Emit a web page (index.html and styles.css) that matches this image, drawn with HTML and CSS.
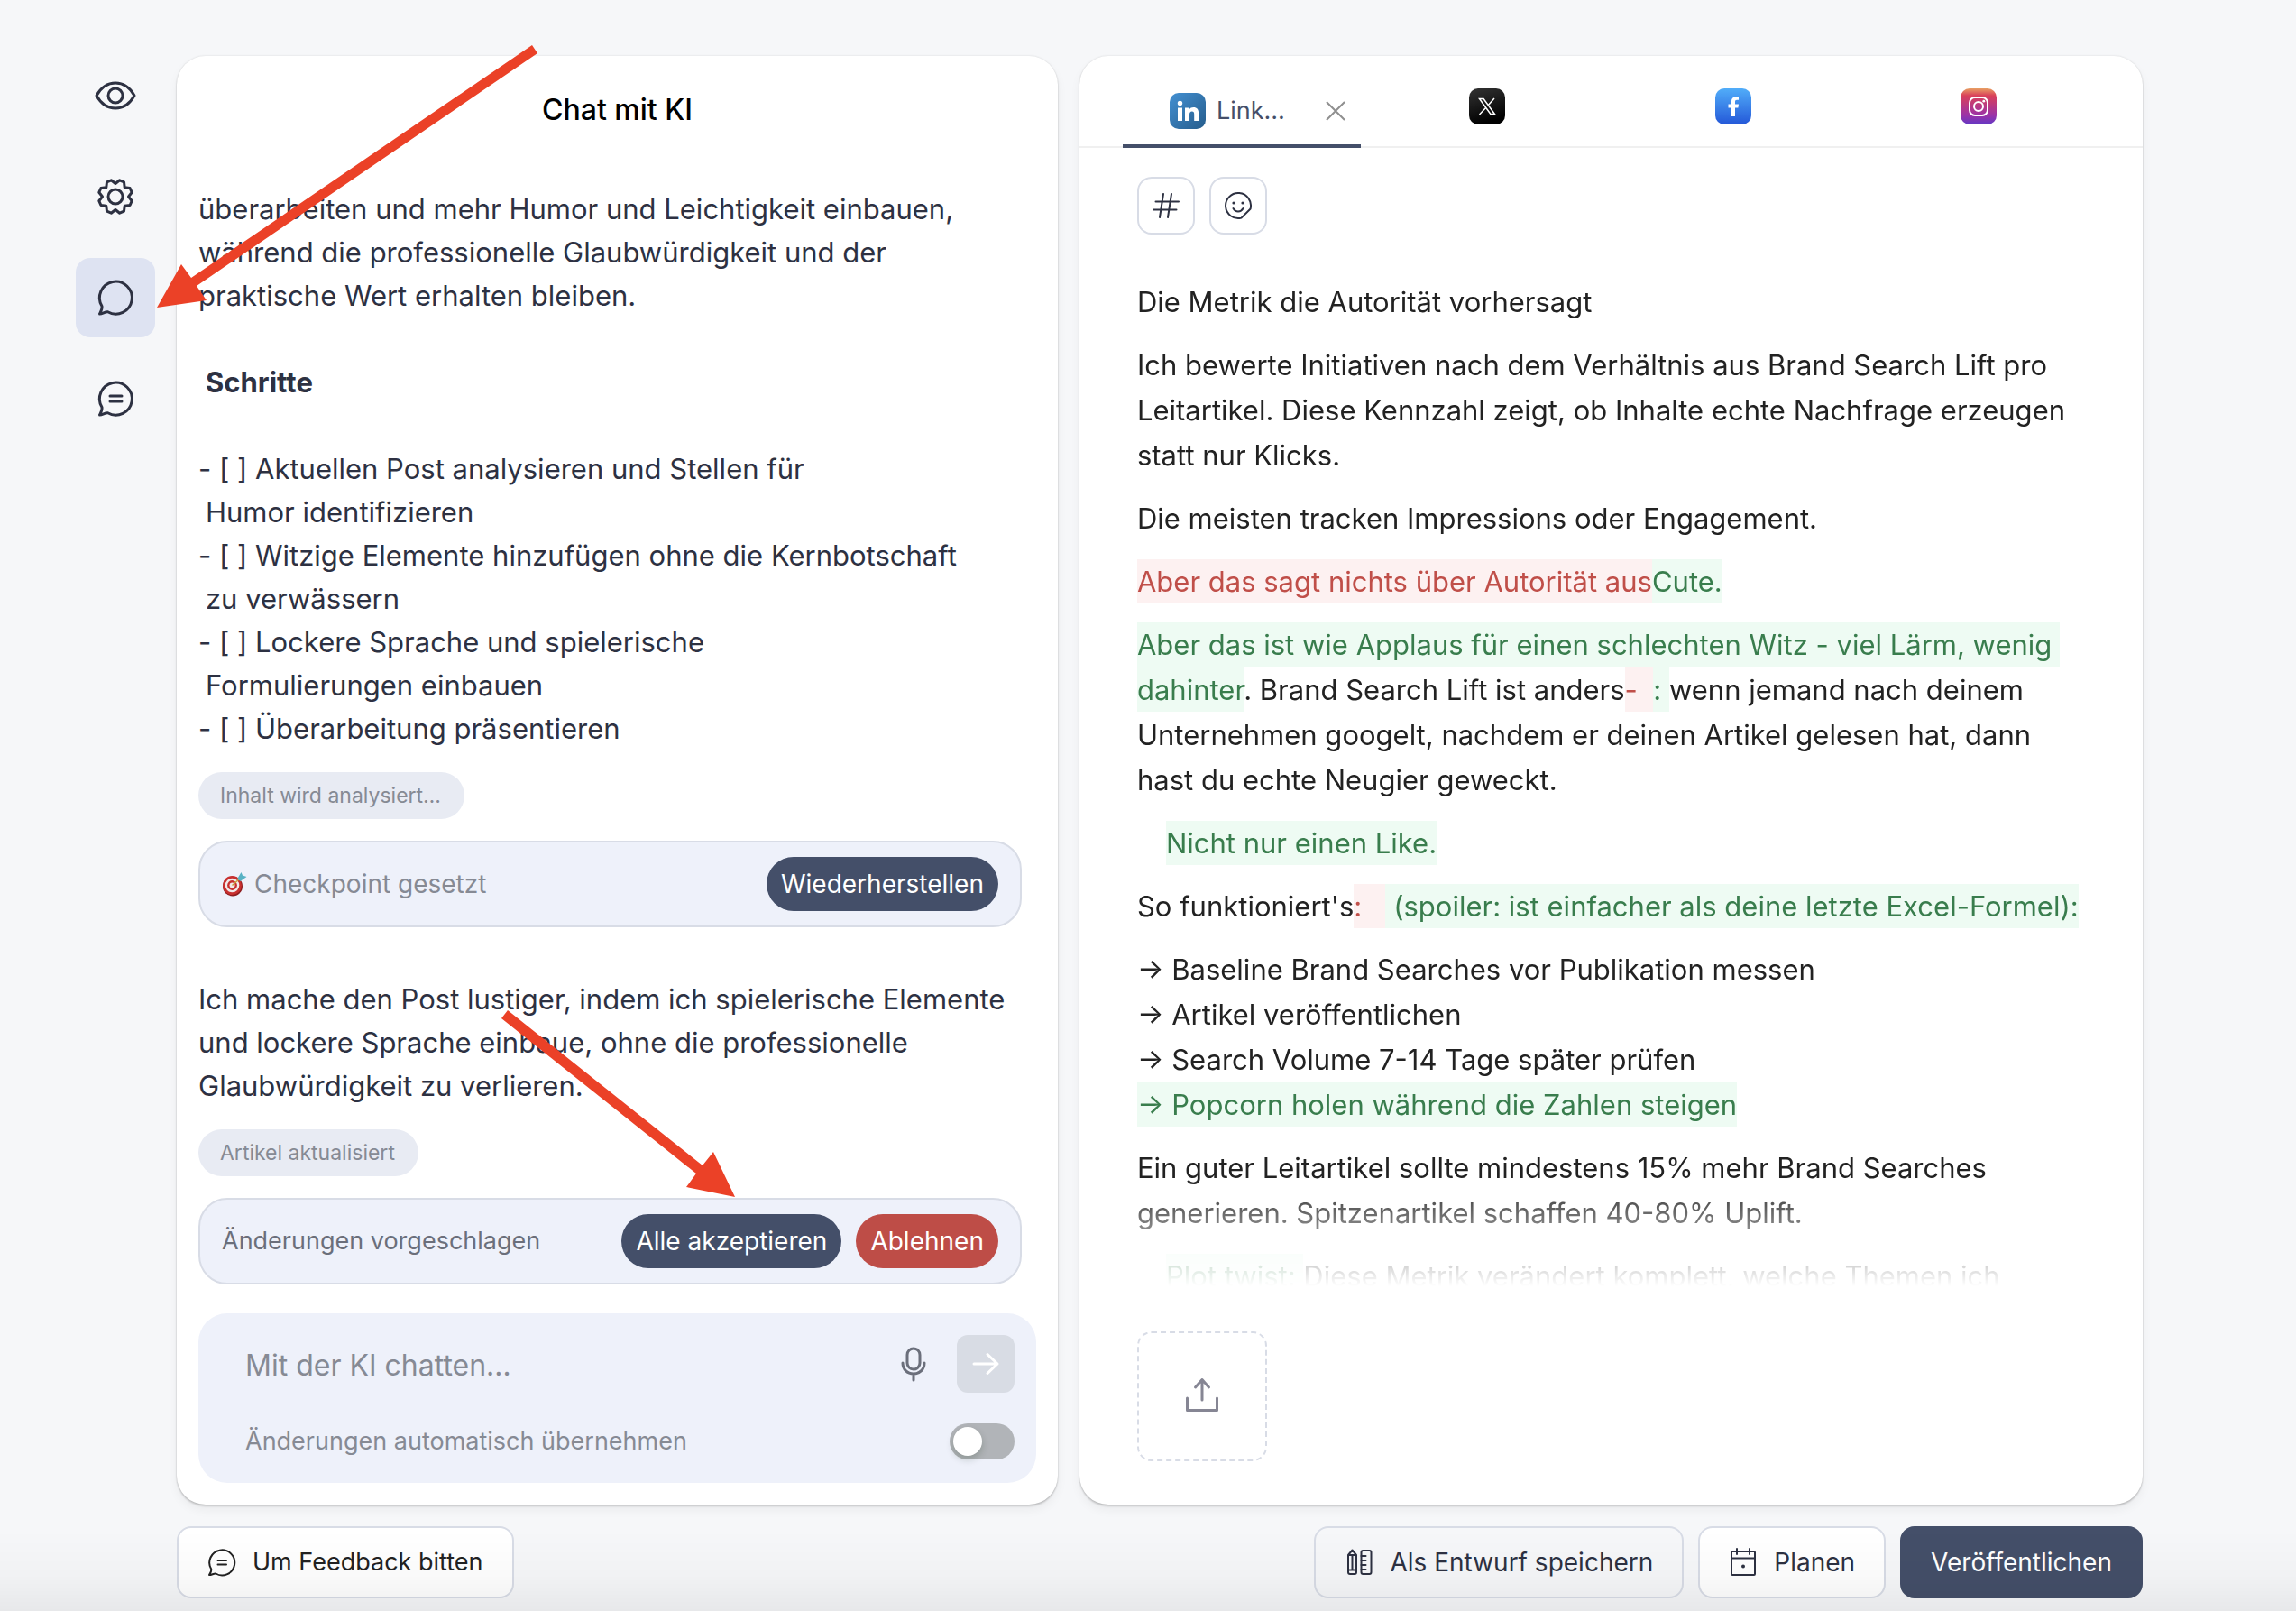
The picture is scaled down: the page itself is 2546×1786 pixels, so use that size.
FILE: index.html
```
<!DOCTYPE html>
<html lang="de">
<head>
<meta charset="utf-8">
<meta name="viewport" content="width=device-width, initial-scale=1">
<title>Chat mit KI</title>
<link rel="stylesheet" href="styles.css">
</head>
<body>
<svg class="defs" width="0" height="0" aria-hidden="true">
  <defs>
    <linearGradient id="g-linkedin" x1="0" y1="0" x2="1" y2="1"><stop offset="0" stop-color="#4390d2"/><stop offset="1" stop-color="#265d8c"/></linearGradient>
    <linearGradient id="g-x" x1="0" y1="0" x2="0.3" y2="1"><stop offset="0" stop-color="#333"/><stop offset="1" stop-color="#000"/></linearGradient>
    <linearGradient id="g-facebook" x1="0" y1="0" x2="0" y2="1"><stop offset="0" stop-color="#51adf9"/><stop offset="1" stop-color="#2458d8"/></linearGradient>
    <linearGradient id="g-instagram" x1="0" y1="0" x2="0" y2="1"><stop offset="0" stop-color="#e8a063"/><stop offset="0.2" stop-color="#d9405a"/><stop offset="0.75" stop-color="#9a32a8"/><stop offset="1" stop-color="#6238c4"/></linearGradient>
  </defs>
</svg>

<div class="workspace">
  <nav class="rail" aria-label="Ansichten">
    <button class="rail-button" type="button" aria-label="Vorschau"><svg class="icon" viewBox="0 0 48 48"><path d="M3 24C8 15 15 10 24 10S40 15 45 24C40 33 33 38 24 38S8 33 3 24Z"/><circle cx="24" cy="24" r="8"/></svg></button>
    <button class="rail-button" type="button" aria-label="Einstellungen"><svg class="icon" viewBox="0 0 48 48"><path d="M24 9.500 28.700 5.800 33.500 7.900 34.200 13.800 40.100 14.500 42.200 19.300 38.500 24 42.200 28.700 40.100 33.500 34.200 34.200 33.500 40.100 28.700 42.200 24 38.500 19.300 42.200 14.500 40.100 13.800 34.200 7.900 33.500 5.800 28.700 9.500 24 5.800 19.300 7.900 14.500 13.800 13.800 14.500 7.900 19.300 5.800Z"/><circle cx="24" cy="24" r="8"/></svg></button>
    <button class="rail-button is-active" type="button" aria-label="Chat"><svg class="icon" viewBox="0 0 48 48"><path d="M9 33.500A18 18 0 1 1 15.500 39.800C12 39.600 10 42 6.500 42 8 39 9.500 36.500 9 33.500Z"/></svg></button>
    <button class="rail-button" type="button" aria-label="Kommentare"><svg class="icon" viewBox="0 0 48 48"><path d="M9 33.500A18 18 0 1 1 15.500 39.800C12 39.600 10 42 6.500 42 8 39 9.500 36.500 9 33.500ZM18 21h13M18 27h13"/></svg></button>
  </nav>

  <section class="panel chat">
    <h1 class="chat-title">Chat mit KI</h1>
    <div class="chat-log">
      <p>überarbeiten und mehr Humor und Leichtigkeit einbauen,<br>während die professionelle Glaubwürdigkeit und der<br>praktische Wert erhalten bleiben.</p>
      <h2>Schritte</h2>
      <ul class="steps">
        <li>- [ ] Aktuellen Post analysieren und Stellen für<br>Humor identifizieren</li>
        <li>- [ ] Witzige Elemente hinzufügen ohne die Kernbotschaft<br>zu verwässern</li>
        <li>- [ ] Lockere Sprache und spielerische<br>Formulierungen einbauen</li>
        <li>- [ ] Überarbeitung präsentieren</li>
      </ul>
      <span class="chip">Inhalt wird analysiert…</span>
      <div class="action-card checkpoint">
        <svg class="target" viewBox="0 0 28 28" aria-hidden="true"><ellipse cx="12" cy="16.500" rx="11" ry="11" fill="#8e1d1f"/><ellipse cx="11.500" cy="15.500" rx="10.500" ry="10.500" fill="#c8302f"/><circle cx="11.500" cy="15.500" r="7.800" fill="#f1e9e9"/><circle cx="11.500" cy="15.500" r="5.400" fill="#c8302f"/><circle cx="11.500" cy="15.500" r="3" fill="#f1e9e9"/><path d="M11.500 15.500 20 8" stroke="#c9a13c" stroke-width="1.500"/><path d="M17 8.500 21.500 1 23 4.500 27.500 6 20.500 11Z" fill="#58b2c4"/></svg>
        <span class="card-label">Checkpoint gesetzt</span>
        <button class="pill" type="button">Wiederherstellen</button>
      </div>
      <p class="reply">Ich mache den Post lustiger, indem ich spielerische Elemente<br>und lockere Sprache einbaue, ohne die professionelle<br>Glaubwürdigkeit zu verlieren.</p>
      <span class="chip">Artikel aktualisiert</span>
      <div class="action-card">
        <span class="card-label">Änderungen vorgeschlagen</span>
        <button class="pill" type="button">Alle akzeptieren</button>
        <button class="pill pill-danger" type="button">Ablehnen</button>
      </div>
    </div>
    <form class="composer">
      <div class="composer-row">
        <input class="composer-input" type="text" placeholder="Mit der KI chatten…" aria-label="Mit der KI chatten">
        <button class="mic" type="button" aria-label="Spracheingabe"><svg class="icon" viewBox="0 0 48 48"><rect x="17" y="7" width="14" height="23" rx="7"/><path d="M12 23c0 7 5 12 12 12s12-5 12-12M24 35v7"/></svg></button>
        <button class="send" type="submit" aria-label="Senden"><svg class="icon" viewBox="0 0 48 48"><path d="M11 24h26M26 13.500 37 24 26 34.500"/></svg></button>
      </div>
      <div class="composer-row">
        <label class="auto-label" for="auto">Änderungen automatisch übernehmen</label>
        <input class="switch" id="auto" type="checkbox">
      </div>
    </form>
  </section>

  <section class="panel post">
    <div class="tabs">
      <div class="tab is-active">
        <button class="tab-button" type="button">
          <svg class="logo" viewBox="0 0 40 40" aria-hidden="true"><rect width="40" height="40" rx="10" fill="url(#g-linkedin)"/><circle cx="11.500" cy="11.500" r="2.700" fill="#fff"/><path d="M9 16.500h5V31H9ZM17 16.500h4.800v2c1-1.600 2.600-2.400 4.600-2.400 4 0 5.800 2.500 5.800 6.900v8h-5v-7.300c0-2-.7-3.200-2.400-3.200-1.900 0-2.800 1.300-2.800 3.300V31h-5Z" fill="#fff"/></svg>
          <span>Link...</span>
        </button>
        <button class="tab-close" type="button" aria-label="Tab schließen"><svg viewBox="0 0 24 24" aria-hidden="true"><path d="m2 2 20 20M22 2 2 22"/></svg></button>
      </div>
      <div class="tab"><button class="tab-button" type="button" aria-label="X"><svg class="logo" viewBox="0 0 40 40"><rect width="40" height="40" rx="10" fill="url(#g-x)"/><path d="M11.500 11.500h4.600l12.400 17h-4.600ZM28 11 21.400 18.600M18.600 21.600 11.500 29" fill="none" stroke="#fff" stroke-width="1.500"/></svg></button></div>
      <div class="tab"><button class="tab-button" type="button" aria-label="Facebook"><svg class="logo" viewBox="0 0 40 40"><rect width="40" height="40" rx="10" fill="url(#g-facebook)"/><path d="M18 31V21.500h-3.500V17.500H18v-3c0-3.600 2.100-5.500 5.300-5.500 1.200 0 2.200.1 2.700.2v3.500h-2c-1.500 0-2 .9-2 2.100v2.700h4l-.6 4H22V31Z" fill="#fff"/></svg></button></div>
      <div class="tab"><button class="tab-button" type="button" aria-label="Instagram"><svg class="logo" viewBox="0 0 40 40"><rect width="40" height="40" rx="10" fill="url(#g-instagram)"/><g fill="none" stroke="#fff" stroke-width="2"><rect x="10" y="10" width="20" height="20" rx="6"/><circle cx="20" cy="20" r="5"/></g><circle cx="25.800" cy="14.200" r="1.400" fill="#fff"/></svg></button></div>
    </div>

    <div class="post-body">
      <div class="tools">
        <button class="tool" type="button" aria-label="Hashtags"><svg class="icon tool-icon" viewBox="0 0 32 32"><path d="M4.500 11.500H30M2 20.500H27.500M13 3 9 29M22 3 18 29"/></svg></button>
        <button class="tool" type="button" aria-label="Emoji"><svg class="icon tool-icon" viewBox="0 0 32 32"><path d="M19.500 29.600A14 14 0 1 1 29.600 19.500ZM10.500 19c2.500 4.500 8.500 4.500 11 0"/><circle class="dot" cx="11" cy="13" r="1.600"/><circle class="dot" cx="21" cy="13" r="1.600"/></svg></button>
      </div>

      <article class="editor">
        <p>Die Metrik die Autorität vorhersagt</p>
        <p>Ich bewerte Initiativen nach dem Verhältnis aus Brand Search Lift pro<br>Leitartikel. Diese Kennzahl zeigt, ob Inhalte echte Nachfrage erzeugen<br>statt nur Klicks.</p>
        <p>Die meisten tracken Impressions oder Engagement.</p>
        <p><del>Aber das sagt nichts über Autorität aus</del><ins>Cute.</ins></p>
        <p><ins>Aber das ist wie Applaus für einen schlechten Witz - viel Lärm, wenig&nbsp;<br>dahinter</ins>. Brand Search Lift ist anders<del>-&nbsp;&nbsp;</del><ins>:&nbsp;</ins>wenn jemand nach deinem<br>Unternehmen googelt, nachdem er deinen Artikel gelesen hat, dann<br>hast du echte Neugier geweckt.</p>
        <p class="inserted"><ins>Nicht nur einen Like.</ins></p>
        <p>So funktioniert's<del>:&nbsp;&nbsp;&nbsp;</del><ins>&nbsp;(spoiler: ist einfacher als deine letzte Excel-Formel):</ins></p>
        <p>→ Baseline Brand Searches vor Publikation messen<br>→ Artikel veröffentlichen<br>→ Search Volume 7-14 Tage später prüfen<br><ins>→ Popcorn holen während die Zahlen steigen</ins></p>
        <p>Ein guter Leitartikel sollte mindestens 15% mehr Brand Searches<br>generieren. Spitzenartikel schaffen 40-80% Uplift.</p>
        <p class="inserted"><ins>Plot twist:&nbsp;</ins>Diese Metrik verändert komplett, welche Themen ich</p>
      </article>

      <button class="upload" type="button" aria-label="Medien hochladen"><svg class="icon" viewBox="0 0 48 48"><path d="M7.500 26V39.500H40.500V26M24 28V5.500M16.500 14 24 5.500l7.500 8.500"/></svg></button>
    </div>
  </section>

  <footer class="actions">
    <button class="action action-feedback" type="button"><svg class="icon action-icon" viewBox="0 0 32 32"><path d="M4.300 23.700A14 14 0 1 1 9.200 28.500C6.600 28.300 5 30 2 30 3.300 27.900 4.600 26 4.300 23.700ZM11.500 14h9.500M11.500 18.500h9.500"/></svg>Um Feedback bitten</button>
    <button class="action action-plain push" type="button"><svg class="icon action-icon" viewBox="0 0 32 32"><path d="M4 8 8.500 2.500 13 8V27a2 2 0 0 1-2 2H6a2 2 0 0 1-2-2ZM4 8h9M4 24.500h9M8.500 8v16.500"/><rect x="18.500" y="3" width="11" height="26" rx="2"/><path d="M18.500 9h5M18.500 14h5M18.500 19h5M18.500 24h5"/></svg>Als Entwurf speichern</button>
    <button class="action" type="button"><svg class="icon action-icon" viewBox="0 0 32 32"><rect x="3" y="4" width="26" height="26" rx="1"/><path d="M3 11.500h26M9 1v6M23 1v6"/><circle class="dot" cx="16" cy="20.500" r="2"/></svg>Planen</button>
    <button class="action action-primary" type="button">Veröffentlichen</button>
  </footer>
</div>

<div class="bottom-fade"></div>

<svg class="pointers" width="840" height="1340" viewBox="0 0 840 1340" aria-hidden="true">
  <path d="M590 50 596 59 218 317 229 333 174 341 201 293 212 308Z"/>
  <path d="M563 1120 779 1292 791 1277 815 1327 761 1316 772 1301 556 1129Z"/>
</svg>
</body>
</html>
```
FILE: styles.css
```
:root {
  --ink: #2d3142;
  --navy: #444f69;
  --line: #d8dce6;
  --soft: #eef1fa;
  --muted: #868a94;
  --radius: 16px;
}

* { box-sizing: border-box; }

body {
  margin: 0;
  min-height: 100vh;
  background: #f6f7f9;
  color: var(--ink);
  font: 400 31px/48px "Inter", "Liberation Sans", sans-serif;
}

h1, h2, p, ul { margin: 0; padding: 0; }

button, input {
  margin: 0;
  font: inherit;
  color: inherit;
}

button {
  display: inline-flex;
  align-items: center;
  justify-content: center;
  padding: 0;
  border: 0;
  background: none;
  cursor: pointer;
}

.defs { position: absolute; }

.icon {
  flex: none;
  width: 48px;
  height: 48px;
  fill: none;
  stroke: currentColor;
  stroke-width: 3;
  stroke-linecap: round;
  stroke-linejoin: round;
}

.dot { fill: currentColor; stroke: none; }

.workspace {
  display: grid;
  grid-template-columns: 88px minmax(0, 29fr) minmax(0, 35fr);
  gap: 24px;
  padding: 62px 170px 14px 84px;
}

/* Rail */
.rail {
  display: flex;
  flex-direction: column;
  gap: 24px;
}

.rail-button {
  height: 88px;
  border-radius: var(--radius);
}

.rail-button.is-active { background: #dee3f2; }

/* Panels */
.panel {
  display: flex;
  flex-direction: column;
  min-width: 0;
  border-radius: 32px;
  background: #fff;
  box-shadow: 0 2px 2px rgba(0, 0, 0, 0.16), 0 0 2px rgba(0, 0, 0, 0.14), 0 6px 12px rgba(0, 0, 0, 0.05);
}

/* Chat */
.chat { padding: 36px 24px 24px; }

.chat-title {
  color: #000;
  font-size: 32px;
  font-weight: 500;
  text-align: center;
}

.chat-log {
  display: flex;
  flex-direction: column;
  align-items: flex-start;
  gap: 24px;
  padding: 62px 16px 32px 0;
  white-space: nowrap;
}

.chat-log h2 {
  padding: 24px 8px;
  font-size: 31px;
  font-weight: 700;
}

.steps {
  padding-left: 8px;
  list-style: none;
}

.steps li { text-indent: -8px; }

.chip {
  padding: 0 26px 0 24px;
  border-radius: 26px;
  background: #e8ebf3;
  color: var(--muted);
  font-size: 23px;
  line-height: 52px;
}

.action-card {
  display: flex;
  align-items: center;
  gap: 16px;
  align-self: stretch;
  height: 96px;
  padding: 0 24px;
  border: 2px solid var(--line);
  border-radius: 32px;
  background: var(--soft);
  color: #6b6f7b;
  font-size: 27px;
}

.checkpoint {
  gap: 8px;
  color: var(--muted);
  font-size: 28px;
}

.card-label { flex: 1; }

.target {
  width: 28px;
  height: 28px;
}

.pill {
  height: 60px;
  padding: 0 16px;
  border-radius: 30px;
  background: var(--navy);
  color: #fff;
  font-size: 28px;
}

.pill-danger { background: #be4d47; }

.reply { padding-top: 32px; }

.composer {
  display: flex;
  flex-direction: column;
  gap: 24px;
  margin-top: auto;
  padding: 24px 24px 16px 52px;
  border-radius: 32px;
  background: var(--soft);
}

.composer-row {
  display: flex;
  align-items: center;
  min-height: 60px;
}

.composer-input {
  flex: 1;
  min-width: 0;
  padding: 4px 0 0;
  border: 0;
  outline: 0;
  background: none;
  font-size: 32px;
}

.composer-input::placeholder {
  color: var(--muted);
  opacity: 1;
}

.mic { margin-right: 24px; color: #6b6f7b; }

.send {
  width: 64px;
  height: 64px;
  border-radius: 12px;
  background: #d8dce4;
  color: #fff;
}

.auto-label {
  flex: 1;
  color: var(--muted);
  font-size: 27px;
}

.switch {
  display: flex;
  align-items: center;
  width: 72px;
  height: 40px;
  padding: 4px;
  border-radius: 20px;
  appearance: none;
  background: #b1b4b8;
}

.switch::before {
  width: 32px;
  height: 32px;
  border-radius: 50%;
  background: #fff;
  box-shadow: 0 4px 8px rgba(0, 35, 11, 0.2);
  content: "";
}

.switch:checked { justify-content: flex-end; background: var(--navy); }

/* Post */
.tabs {
  display: grid;
  grid-template-columns: repeat(4, minmax(0, 1fr));
  gap: 8px;
  height: 102px;
  padding: 0 50px 0 48px;
  border-bottom: 2px solid #f0f0f0;
}

.tab {
  display: flex;
  align-items: center;
  justify-content: center;
  height: 102px;
  padding-top: 14px;
  border-bottom: 4px solid transparent;
}

.tab.is-active {
  justify-content: space-between;
  padding: 24px 16px 0 52px;
  border-color: var(--navy);
}

.tab-button {
  gap: 12px;
  color: var(--navy);
  font-size: 27px;
}

.logo {
  width: 40px;
  height: 40px;
}

.tab-close svg {
  width: 24px;
  height: 24px;
  fill: none;
  stroke: #8f8f8f;
  stroke-width: 2;
}

.post-body {
  display: flex;
  flex: 1;
  flex-direction: column;
  min-height: 0;
  padding: 32px 48px 48px 64px;
}

.tools {
  display: flex;
  gap: 16px;
}

.tool {
  width: 64px;
  height: 64px;
  border: 2px solid var(--line);
  border-radius: var(--radius);
}

.tool-icon {
  width: 32px;
  height: 32px;
  stroke-width: 2;
}

.editor {
  display: flex;
  flex: 1 1 0;
  flex-direction: column;
  gap: 20px;
  min-height: 0;
  margin: 50px 0;
  overflow: hidden;
  color: #222;
  line-height: 50px;
  white-space: nowrap;
  mask-image: linear-gradient(to top, transparent, #000 120px);
}

.editor p { flex: none; }

.inserted { padding-left: 32px; }

ins, del {
  padding: 6px 0;
  text-decoration: none;
}

ins { background: #eefbf3; color: #397d4d; }

del { background: #fdf1f1; color: #c04f49; }

.upload {
  flex: none;
  width: 144px;
  height: 144px;
  border: 2px dashed var(--line);
  border-radius: var(--radius);
  color: #868694;
}

/* Footer */
.actions {
  display: flex;
  grid-column: 2 / 4;
  gap: 16px;
}

.action {
  gap: 18px;
  height: 80px;
  padding: 0 32px;
  border: 2px solid var(--line);
  border-radius: var(--radius);
  background: #fff;
  font-size: 28px;
  white-space: nowrap;
}

.action-icon {
  width: 32px;
  height: 32px;
  stroke-width: 2;
}

.action-feedback { color: #222; font-size: 27px; }

.action-plain { background: none; }

.push { margin-left: auto; }

.action-primary {
  border-color: var(--navy);
  background: var(--navy);
  color: #fff;
}

.bottom-fade {
  position: fixed;
  right: 0;
  bottom: 0;
  left: 0;
  height: 90px;
  background: linear-gradient(transparent, rgba(0, 0, 0, 0.02) 55%, rgba(0, 0, 0, 0.06));
  pointer-events: none;
}

.pointers {
  position: absolute;
  top: 0;
  left: 0;
  fill: #eb4127;
  pointer-events: none;
}
```
